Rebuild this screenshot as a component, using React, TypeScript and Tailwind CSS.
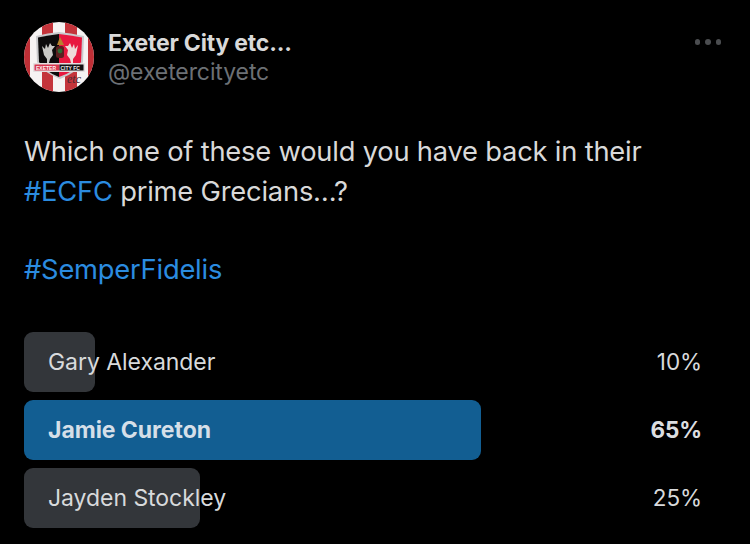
const options = [
  { name: "Gary Alexander", pct: "10%", barClass: "w-[71px] bg-[#33363a]", textClass: "font-normal text-[#d8dadc]", pctClass: "font-normal text-[#d8dadc]" },
  { name: "Jamie Cureton", pct: "65%", barClass: "w-[457px] bg-[#125e92]", textClass: "font-bold text-[#d5dfe8]", pctClass: "font-bold text-[#dcdee0]" },
  { name: "Jayden Stockley", pct: "25%", barClass: "w-[176px] bg-[#33363a]", textClass: "font-normal text-[#d8dadc]", pctClass: "font-normal text-[#d8dadc]" },
]

function Crest() {
  return (
    <svg width="70" height="70" viewBox="0 0 70 70" className="shrink-0">
      <defs>
        <clipPath id="round">
          <circle cx="35" cy="35" r="35" />
        </clipPath>
      </defs>
      {/* stripes */}
      <g clipPath="url(#round)">
        <rect width="70" height="70" fill="#f6f3f3" />
        <rect x="0" width="6" height="70" fill="#bf2f36" />
        <rect x="18" width="11" height="70" fill="#c4343b" />
        <rect x="41" width="12" height="70" fill="#c4343b" />
        <rect x="64" width="6" height="70" fill="#bf2f36" />
      </g>
      {/* shield */}
      <path d="M12 14 Q24 11 35 10 Q46 11 60 14 L59 40 Q54 50 36 57 Q18 50 13 40 Z" fill="#c9c9cc" />
      <path d="M14 15.5 Q25 13 35 12 L35 55 Q20 49 15 40 Z" fill="#0c0b0c" />
      <path d="M58 15.5 Q46 13 35 12 L35 55 Q52 49 57 40 Z" fill="#e8183f" />
      {/* birds */}
      <path d="M18 24 L21 27 L22 22 L24 26 L26 21 L28 24 L31 24 L28 28 L29 33 L26 37 L25 41 L23 41 L23 37 L20 33 Z" fill="#c9c9c6" />
      <path d="M54 23 L51 27 L50 22 L48 26 L46 21 L44 24 L41 24 L44 28 L43 33 L46 37 L47 41 L49 41 L49 37 L52 33 Z" fill="#eed9d7" />
      {/* centre castle and palm */}
      <rect x="32" y="24" width="8" height="12" rx="2.5" fill="#5b1f20" />
      <path d="M33 23 L36 15 L40 23 Z" fill="#b5822f" />
      <circle cx="36" cy="29" r="2.4" fill="#2c6a33" />
      {/* name band */}
      <rect x="9" y="41" width="52" height="9" rx="1" fill="#e4dfe0" />
      <rect x="10.5" y="42.5" width="25" height="6" fill="#d8364f" />
      <rect x="35.5" y="42.5" width="24" height="6" fill="#121113" />
      <text x="12" y="47.6" fontSize="5" fontWeight="800" fill="#fdf3f3" fontFamily="Liberation Sans, sans-serif">EXETER</text>
      <text x="36.5" y="47.6" fontSize="5" fontWeight="800" fill="#f4f0f0" fontFamily="Liberation Sans, sans-serif">CITY FC</text>
      <text x="43" y="61" fontSize="12" fontStyle="italic" fill="#4a2a32" fontFamily="Liberation Serif, serif">etc</text>
    </svg>
  )
}

export default function App() {
  return (
    <div className="h-[544px] w-[750px] overflow-hidden bg-black px-6 pt-[22px] font-['Inter','Liberation_Sans',sans-serif]">
      {/* header */}
      <div className="flex items-start">
        <Crest />
        <div className="ml-[14px] flex-1 pt-[6px]">
          <div className="text-[23px] font-bold leading-[30px] tracking-[-0.2px] text-[#d9d9d9]">
            Exeter City etc...
          </div>
          <div className="text-[23px] leading-[28px] tracking-[-0.1px] text-[#6c7075]">
            @exetercityetc
          </div>
        </div>
        <div className="mr-[5px] mt-[17px] flex gap-[5px]">
          <span className="h-[5.5px] w-[5.5px] rounded-full bg-[#4b4d50]" />
          <span className="h-[5.5px] w-[5.5px] rounded-full bg-[#4b4d50]" />
          <span className="h-[5.5px] w-[5.5px] rounded-full bg-[#4b4d50]" />
        </div>
      </div>

      {/* tweet text */}
      <div className="mt-[40px] text-[27.3px] leading-[39.5px] tracking-[-0.2px] text-[#d9d9d9]">
        <p>Which one of these would you have back in their</p>
        <p>
          <span className="text-[#2b8ce0]">#ECFC</span> prime Grecians…?
        </p>
        <p className="mt-[39px] text-[#2b8ce0]">#SemperFidelis</p>
      </div>

      {/* poll */}
      <div className="mt-[42.5px] flex flex-col gap-2">
        {options.map((o) => (
          <div key={o.name} className="relative flex h-[60px] items-center justify-between">
            <div className={`absolute inset-y-0 left-0 rounded-[9px] ${o.barClass}`} />
            <span className={`relative pl-6 text-[23px] tracking-[-0.05px] ${o.textClass}`}>{o.name}</span>
            <span className={`relative pr-[24px] text-[22.5px] tracking-[-0.1px] ${o.pctClass}`}>{o.pct}</span>
          </div>
        ))}
      </div>
    </div>
  )
}
